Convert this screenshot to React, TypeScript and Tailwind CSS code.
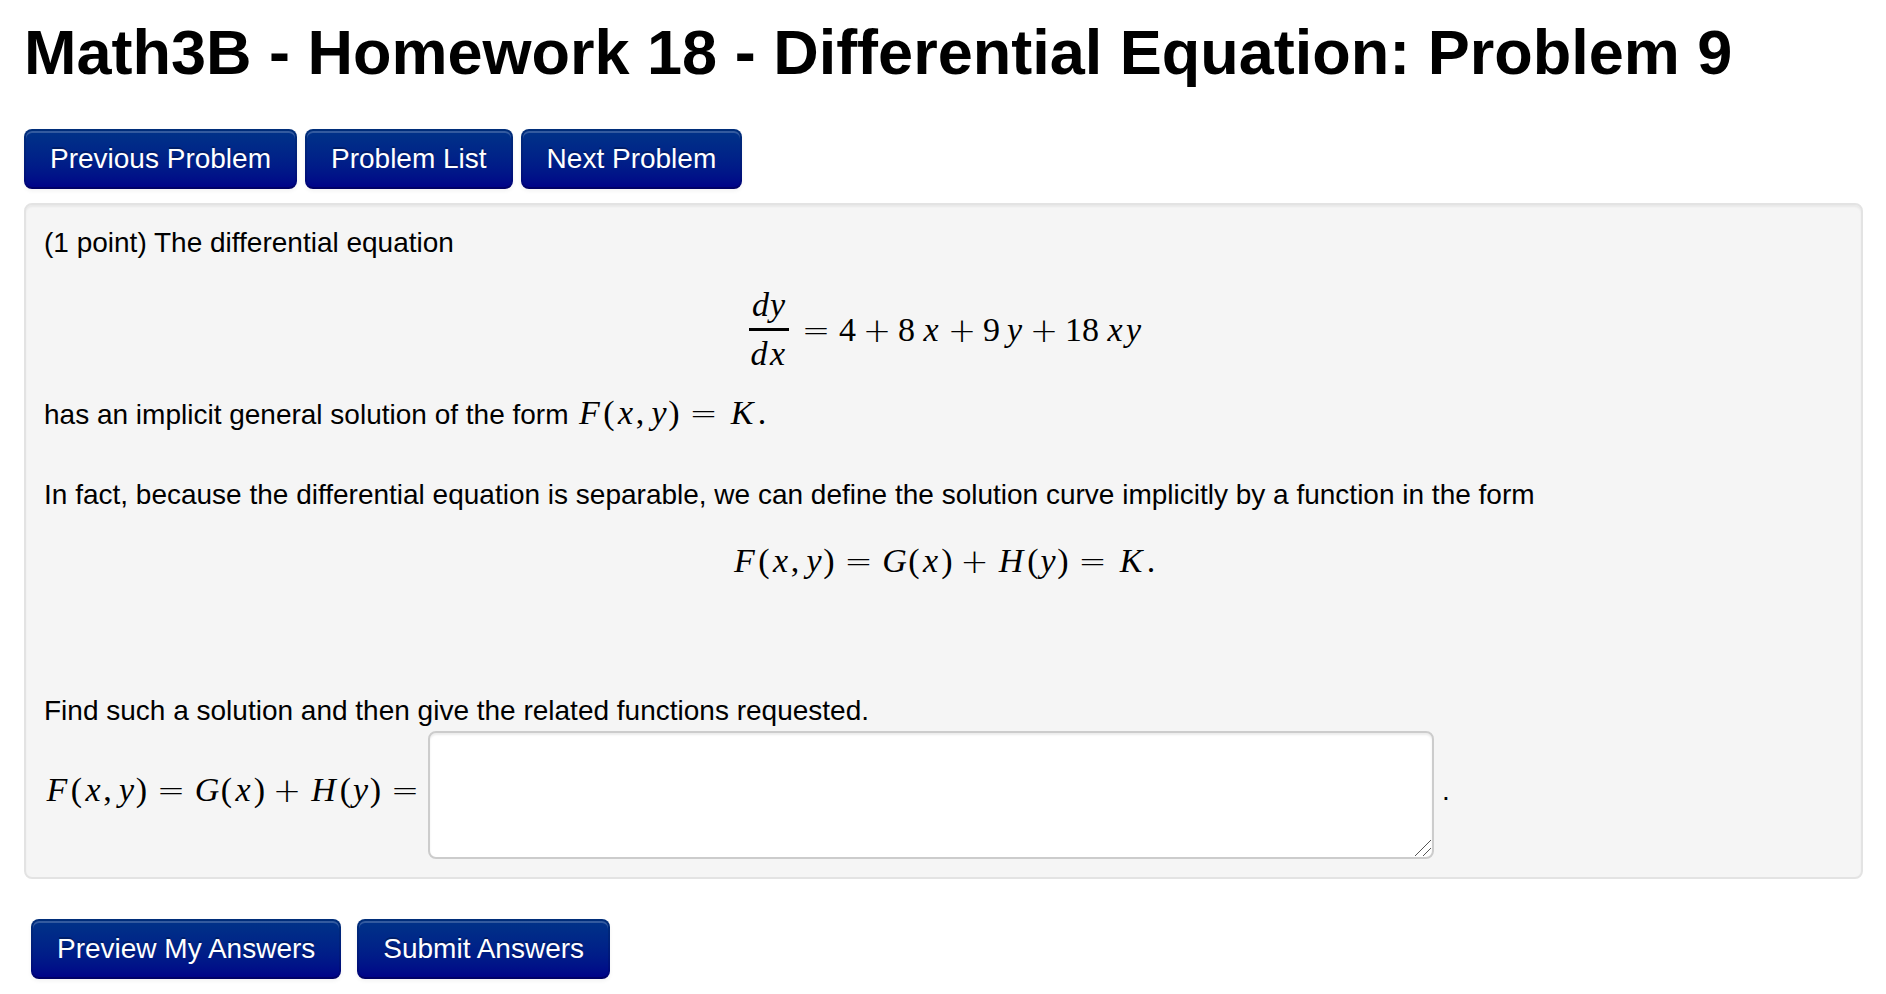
import type { ReactNode } from "react";
import clsx from "clsx";

const glyphs: Record<string, string> = {
  "(": "w-[13px]",
  ")": "w-[13px]",
  ",": "w-[9px] mr-[6px]",
  ".": "w-[9px]",
  "=": "w-[26px] mx-[10px] font-['DejaVu_Sans'] font-extralight",
  "+": "w-[26px] mx-2 font-['DejaVu_Sans'] font-extralight",
  "~": "w-[6px]",
  F: "w-[26px] italic",
  G: "w-[26px] italic",
  H: "w-[31px] italic",
  K: "w-[31px] italic",
  d: "w-[17px] italic",
  x: "w-5 italic",
  y: "w-[17px] italic",
};

// "~" is a thin space
function Tex({ children }: { children: string }) {
  return (
    <span className="inline-flex font-['Liberation_Serif',serif] text-[34px] leading-10">
      {children.split("").map((char, index) => (
        <span
          key={index}
          className={clsx("flex justify-center", glyphs[char] ?? "w-[17px]")}
        >
          {char === "~" ? "" : char}
        </span>
      ))}
    </span>
  );
}

function Button({ children }: { children: ReactNode }) {
  return (
    <button
      type="button"
      className="
        cursor-pointer rounded-lg border-2 border-black/10 border-b-black/25
        bg-linear-to-b from-[#003388] to-[#000088] bg-origin-border px-6 py-2
        text-white text-shadow-[0_-2px_0_rgba(0,0,0,0.25)]
        shadow-[inset_0_2px_0_rgba(255,255,255,0.2),0_2px_4px_rgba(0,0,0,0.05)]
      "
    >
      {children}
    </button>
  );
}

export default function App() {
  return (
    <main className="bg-white pt-3 pr-[23px] pb-[15px] pl-6 font-['Liberation_Sans',sans-serif] text-[28px] leading-10 text-black">
      <h1 className="mb-[37px] text-[63px] font-bold leading-20">
        Math3B - Homework 18 - Differential Equation: Problem 9
      </h1>

      {/* NAVIGATION */}
      <nav className="mb-[14px] flex flex-wrap gap-2">
        <Button>Previous Problem</Button>
        <Button>Problem List</Button>
        <Button>Next Problem</Button>
      </nav>

      {/* PROBLEM */}
      <section className="rounded-lg border-2 border-[#e3e3e3] bg-[#f5f5f5] p-[18px] shadow-[inset_0_2px_2px_rgba(0,0,0,0.05)]">
        <p>(1 point) The differential equation</p>

        <div className="flex items-center justify-center pt-[22px] pb-[19px]">
          <span className="mx-1 flex flex-col items-center">
            <Tex>dy</Tex>
            <span className="my-[3px] h-[3px] w-10 bg-black" />
            <Tex>dx</Tex>
          </span>
          <Tex>=4+8~x+9~y+18~xy</Tex>
        </div>

        <p className="mb-10 flex flex-wrap items-baseline gap-x-2">
          has an implicit general solution of the form
          <Tex>F(x,y)=K.</Tex>
        </p>

        <p>
          In fact, because the differential equation is separable, we can define
          the solution curve implicitly by a function in the form
        </p>

        <div className="flex justify-center pt-[26px] pb-[110px]">
          <Tex>F(x,y)=G(x)+H(y)=K.</Tex>
        </div>

        <p>Find such a solution and then give the related functions requested.</p>

        <div className="flex items-center">
          <label htmlFor="answer" className="pb-2">
            <Tex>F(x,y)=G(x)+H(y)=</Tex>
          </label>
          <div className="relative mr-2 w-[1006px] min-w-0">
            <textarea
              id="answer"
              className="
                block h-32 w-full resize-none rounded-lg border-2
                border-[#ccc] bg-white px-3 py-2
                shadow-[inset_0_2px_2px_rgba(0,0,0,0.075)]
              "
            />
            <svg
              viewBox="0 0 16 16"
              className="pointer-events-none absolute right-[3px] bottom-[3px] size-4"
              fill="none"
              stroke="#555"
            >
              <path d="M0 16 16 0M8 16l8-8" />
            </svg>
          </div>
          <span className="pb-2">.</span>
        </div>
      </section>

      {/* ACTIONS */}
      <div className="mt-10 flex flex-wrap gap-4 px-[7px]">
        <Button>Preview My Answers</Button>
        <Button>Submit Answers</Button>
      </div>
    </main>
  );
}
